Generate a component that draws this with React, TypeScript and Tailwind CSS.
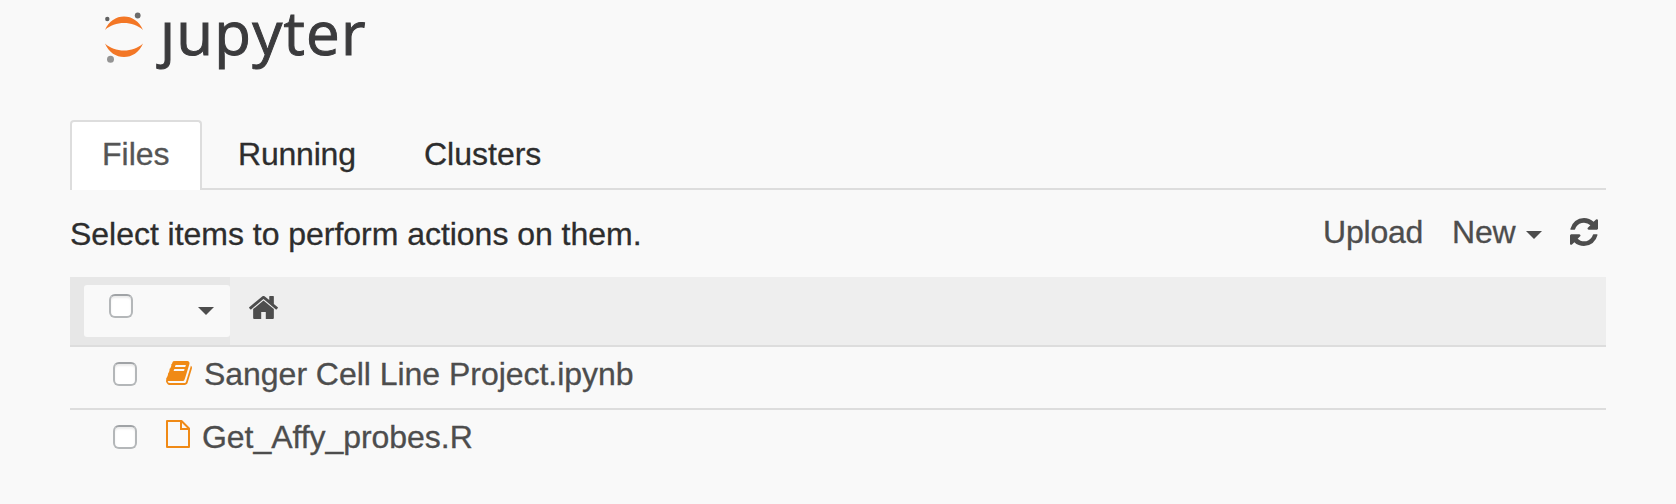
import React from 'react';

const REFRESH =
  'M1639 1056q0 5-1 7-64 268-268 434.5t-478 166.5q-146 0-282.5-55t-243.5-157l-129 129q-19 19-45 19t-45-19-19-45v-448q0-26 19-45t45-19h448q26 0 45 19t19 45-19 45l-137 137q71 66 161 102t187 36q134 0 250-65t186-179q11-17 53-117 8-23 30-23h192q13 0 22.5 9.5t9.5 22.5zm25-800v448q0 26-19 45t-45 19h-448q-26 0-45-19t-19-45 19-45l138-138q-148-137-349-137-134 0-250 65t-186 179q-11 17-53 117-8 23-30 23h-199q-13 0-22.5-9.5t-9.5-22.5v-7q65-268 270-434.5t480-166.5q146 0 284 55.5t245 156.5l130-129q19-19 45-19t45 19 19 45z';
const HOME =
  'M1472 992v480q0 26-19 45t-45 19h-384v-384h-256v384h-384q-26 0-45-19t-19-45v-480q0-1 .5-3t.5-3l575-474 575 474q1 2 1 6zm223-69l-62 74q-8 9-21 11h-3q-13 0-21-7l-692-577-692 577q-12 8-24 7-13-2-21-11l-62-74q-8-10-7-23.5t11-21.5l719-599q32-26 76-26t76 26l244 204v-195q0-14 9-23t23-9h192q14 0 23 9t9 23v408l219 182q10 8 11 21.5t-7 23.5z';
const BOOK =
  'M1703 478q40 57 18 129l-275 906q-19 64-76.5 107.5t-122.5 43.5h-923q-77 0-148.5-53.5t-99.5-131.5q-24-67-2-127 0-4 3-27t4-37q1-8-3-21.5t-3-19.5q2-11 8-21t16.5-23.5 16.5-23.5q23-38 45-91.5t30-91.5q3-10 .5-30t-.5-28q3-11 17-28t17-23q21-36 42-92t25-90q1-9-2.5-32t.5-28q4-13 22-30.5t22-22.5q19-26 42.5-84.5t27.5-96.5q1-8-3-25.5t-2-26.5q2-8 9-18t18-23 17-21q8-12 16.5-30.5t15-35 16-36 19.5-32 26.5-23.5 36-11.5 47.5 5.5l-1 3q38-9 51-9h761q74 0 114 56t18 130l-274 906q-36 119-71.5 153.5t-128.5 34.5h-869q-27 0-38 15-11 16-1 43 24 70 144 70h923q29 0 56-15.5t35-41.5l300-987q7-22 5-57 38 15 59 43zm-1064 2q-4 13 2 22.5t20 9.5h608q13 0 25.5-9.5t16.5-22.5l21-64q4-13-2-22.5t-20-9.5h-608q-13 0-25.5 9.5t-16.5 22.5zm-83 256q-4 13 2 22.5t20 9.5h608q13 0 25.5-9.5t16.5-22.5l21-64q4-13-2-22.5t-20-9.5h-608q-13 0-25.5 9.5t-16.5 22.5z';

function Checkbox({ className }: { className: string }) {
  return (
    <input
      type="checkbox"
      className={`size-6 shrink-0 appearance-none rounded-[6px] border-2 border-[#b4b7b9] border-t-[#a0a3a6] bg-white shadow-[inset_0_2px_2px_#ececec] ${className}`}
    />
  );
}

function Caret({ className }: { className: string }) {
  return (
    <svg viewBox="0 0 16 8" className={`h-2 w-4 shrink-0 fill-[#4d4d4d] ${className}`}>
      <path d="M0 0h16L8 8z" />
    </svg>
  );
}

function Logo() {
  return (
    <div className="flex h-[120px] items-start pl-[105px]">
      <svg viewBox="0 0 38 52" className="mt-3 h-[52px] w-[38px] shrink-0">
        <path d="M0 18C4 9 11 4.500 19 4.500S34 9 38 18C33 13.300 26 11 19 11S5 13.300 0 18z" fill="#f37726" />
        <path d="M0 31.500C4 40.500 11 45 19 45s15-4.500 19-13.500C33 36.200 26 38.500 19 38.500S5 36.200 0 31.500z" fill="#f37726" />
        <circle cx="2.300" cy="7" r="2.200" fill="#616161" />
        <circle cx="32.700" cy="3.500" r="2.900" fill="#6c6c6c" />
        <circle cx="5.500" cy="47.300" r="3.500" fill="#949494" />
      </svg>
      <h1 className="ml-[17px] font-['Open_Sans',sans-serif] text-[60px] leading-[64px] tracking-[1.2px] text-[#3b3b3d] [-webkit-text-stroke:1px_#3b3b3d]">ȷupyter</h1>
    </div>
  );
}

export default function App() {
  return (
    <main className="h-[504px] w-[1676px] overflow-hidden bg-[#f9f9f9] font-['Liberation_Sans',Arial,sans-serif] text-[32px] leading-9 text-[#2d2d2d] [-webkit-text-stroke:0.3px]">
      <Logo />
      <nav className="mx-[70px] flex h-[70px]">
        <button className="flex h-[70px] w-[132px] shrink-0 items-start rounded-t-[4px] border-2 border-b-0 border-[#ddd] bg-white pl-[30px] pt-[14px] text-[#555]">
          Files
        </button>
        <div className="flex grow items-center border-b-2 border-[#ddd]">
          <button className="w-[186px] pl-9 text-left tracking-[-0.2px]">Running</button>
          <button className="pl-9 text-left">Clusters</button>
        </div>
      </nav>
      <section className="mx-[70px] flex h-[87px] items-start pt-[26px]">
        <p className="tracking-[-0.03px]">Select items to perform actions on them.</p>
        <div className="ml-auto flex w-[283px] items-start text-[#4d4d4d]">
          <button className="-mt-0.5 w-[129px] text-left tracking-[-0.2px]">Upload</button>
          <button className="-mt-0.5 flex w-[118px] items-start text-left">
            <span className="w-[74px] tracking-[-0.2px]">New</span>
            <Caret className="mt-[17px]" />
          </button>
          <svg viewBox="128 128 1536 1536" className="mt-0.5 size-7 shrink-0 fill-[#4d4d4d]">
            <path d={REFRESH} />
          </svg>
        </div>
      </section>
      <section className="mx-[70px] text-[#4d4d4d]">
        <header className="flex h-[70px] border-b-2 border-[#ddd] bg-[#eee]">
          <div className="w-40 bg-[#e7e7e7] py-2 pl-3.5">
            <div className="flex h-[52px] rounded-[3px] bg-[#f9f9f9]">
              <Checkbox className="ml-[25px] mt-[9px]" />
              <Caret className="ml-[65px] mt-[22px]" />
            </div>
          </div>
          <svg viewBox="90 256 1612 1280" className="ml-[19px] mt-[19px] h-[23px] w-[29px] fill-[#4d4d4d]">
            <path d={HOME} />
          </svg>
        </header>
        <div className="flex h-[63px] items-start border-b-2 border-[#ddd]">
          <Checkbox className="ml-[43px] mt-[15px]" />
          <svg viewBox="0 0 1792 1792" className="ml-[28px] mt-[12px] size-7 shrink-0 fill-[#f08a16]">
            <path d={BOOK} />
          </svg>
          <span className="ml-[11px] mt-[9px] tracking-[-0.03px]">Sanger Cell Line Project.ipynb</span>
        </div>
        <div className="flex h-[63px] items-start">
          <Checkbox className="ml-[43px] mt-[15px]" />
          <svg viewBox="0 0 24 28" className="ml-[29px] mt-[10px] h-7 w-6 shrink-0 fill-none stroke-[#f08a16] stroke-2">
            <path d="M1 1h14.500L23 8.500V27H1z" strokeLinejoin="round" />
            <path d="M15 1v8h8" />
          </svg>
          <span className="ml-[12px] mt-[9px] tracking-[-0.05px]">Get_Affy_probes.R</span>
        </div>
      </section>
    </main>
  );
}
